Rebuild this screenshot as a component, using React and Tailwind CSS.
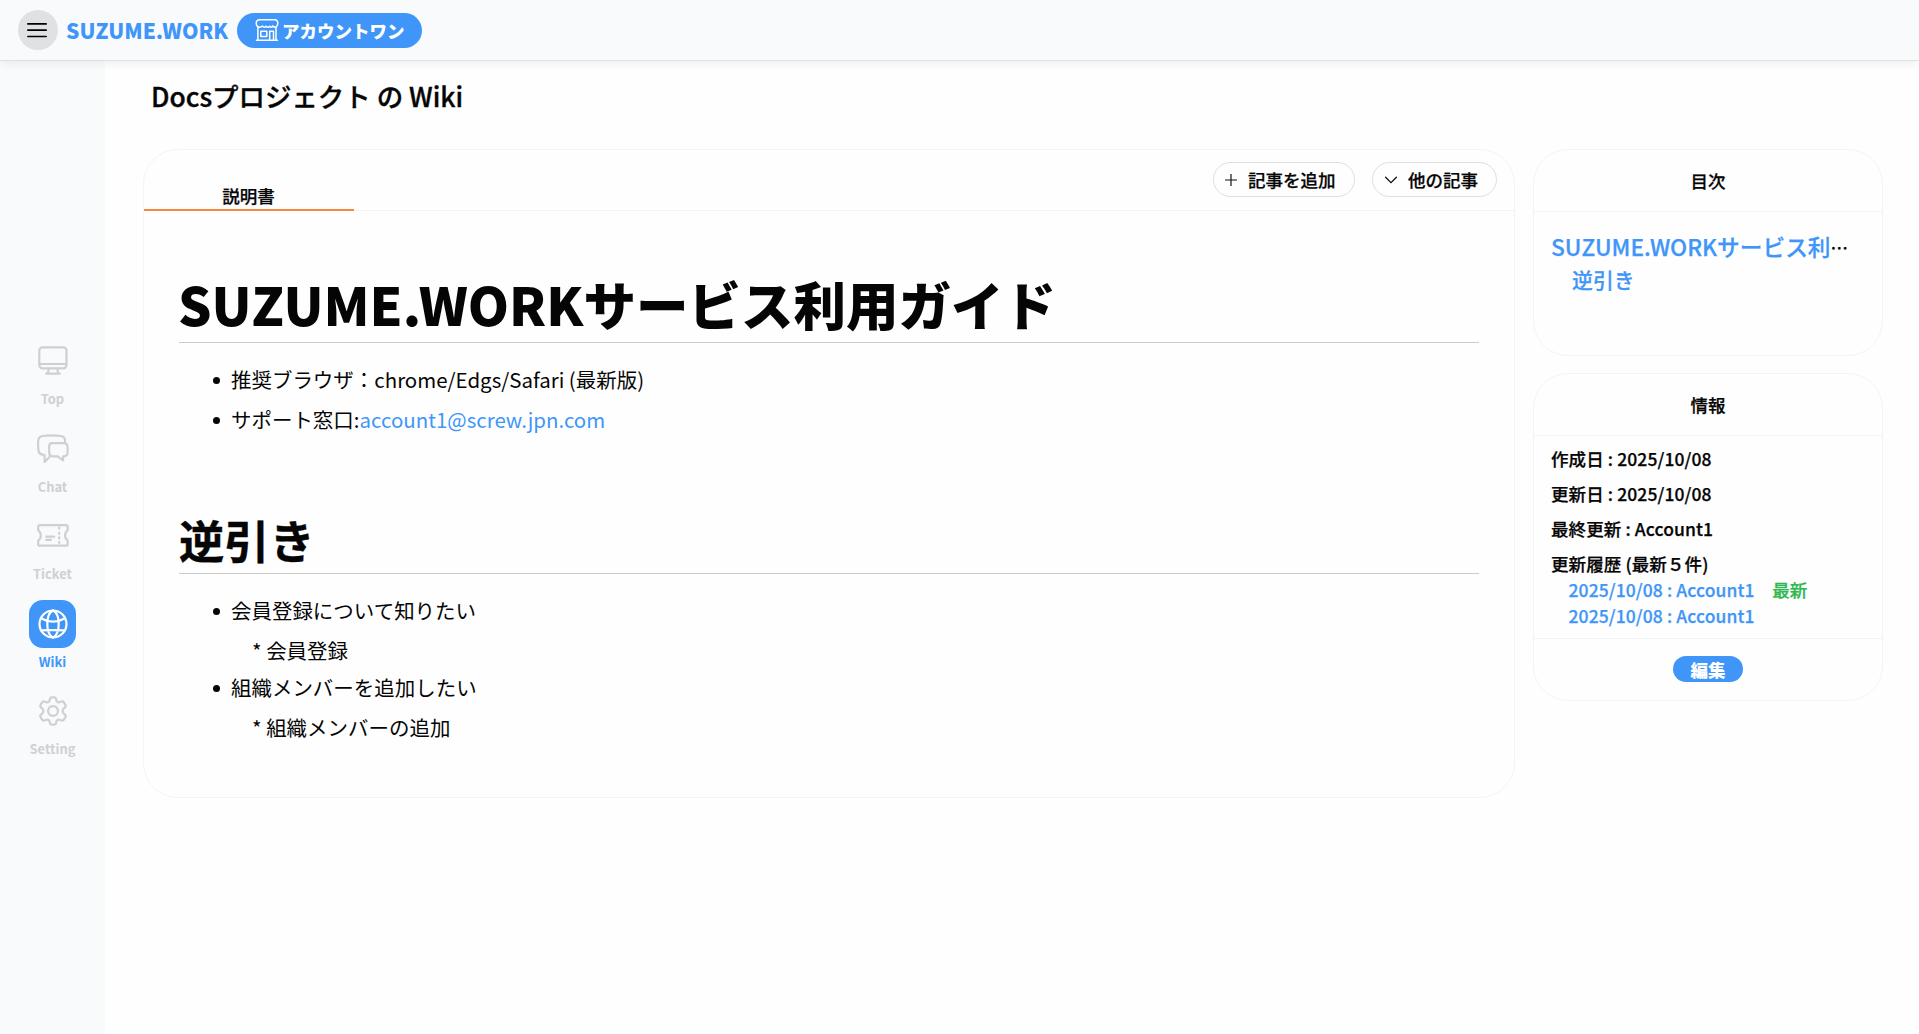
import React from "react";

const Svg = ({ className, children }) => (
  <svg viewBox="0 0 32 32" fill="none" stroke="currentColor" strokeWidth="2.2" strokeLinecap="round" strokeLinejoin="round" className={className}>
    {children}
  </svg>
);

const TopIcon = () => (
  <Svg className="size-8">
    <rect x="2.3" y="2.3" width="27.2" height="21" rx="3.2" />
    <path d="M2.5 19H29.3M11.7 23.6L11 28M20.3 23.6L21 28M9.2 28.7H22.8" />
  </Svg>
);
const ChatIcon = () => (
  <Svg className="size-8">
    <path d="M28 9.8V7.4C28 4.6 26.5 3.5 24 3C18 2.2 11 2.2 5.5 3C2.8 3.4 1.4 5 1.2 8C.9 11.5 1 14.5 1.5 17.5C1.9 20.6 3.6 21.8 7.6 22V29L12.7 23.7" />
    <path d="M15.2 10.2H26.6C29.6 10.2 30.5 11.3 30.6 14.2V19.8C30.5 22.3 29.3 23.3 26.6 23.3H26.1V27.5L20.9 23.3H15.6C13.2 23.3 12.2 22.2 12.2 19.8V13.5C12.2 11.3 13.1 10.2 15.2 10.2Z" />
  </Svg>
);
const TicketIcon = () => (
  <Svg className="size-8">
    <path d="M2.9 5.2H29C30.2 5.2 30.7 5.7 30.7 6.9V10.4C28.9 11.5 28.1 13.2 28.1 15.4C28.1 17.6 28.9 19.3 30.7 20.4V23.9C30.7 25.1 30.2 25.6 29 25.6H2.9C1.7 25.6 1.2 25.1 1.2 23.9V20.4C3 19.3 3.8 17.6 3.8 15.4C3.8 13.2 3 11.5 1.2 10.4V6.9C1.2 5.7 1.7 5.2 2.9 5.2Z" />
    <path d="M9.2 16.6H17.3M9.2 19.8H14M22.2 7.6V8.6M22.2 12.7V13.9M22.2 17.4V18.6M22.2 22V23" />
  </Svg>
);
const WikiIcon = () => (
  <Svg className="size-8">
    <circle cx="16" cy="16" r="13.5" />
    <path d="M16 2.5C11.8 4.5 10.3 10 10.3 16S11.8 27.5 16 29.5M16 2.5C20.2 4.5 21.7 10 21.7 16S20.2 27.5 16 29.5M4 10.2C11.5 14.6 20.5 14.6 28 10.2M4 22.3C11.5 22 20.5 22 28 22.3" />
  </Svg>
);
const SettingIcon = () => (
  <Svg className="size-8">
    <circle cx="16" cy="16" r="4.9" />
    <path d="M13 3.8C13.2 2.7 13.8 2.3 14.7 2.3H17.3C18.2 2.3 18.8 2.7 19 3.8L19.6 6.2C20.3 7.3 21.3 7.7 22.4 7.3L24.7 6.5C25.7 6.2 26.4 6.5 26.9 7.3L28.5 9.9C29 10.7 28.9 11.5 28.2 12.1L26.5 13.7C25.4 14.9 25.4 17.1 26.5 18.3L28.2 19.9C28.9 20.5 29 21.3 28.5 22.1L26.9 24.7C26.4 25.5 25.7 25.8 24.7 25.5L22.4 24.7C21.3 24.3 20.3 24.7 19.6 25.8L19 28.2C18.8 29.3 18.2 29.7 17.3 29.7H14.7C13.8 29.7 13.2 29.3 13 28.2L12.4 25.8C11.7 24.7 10.7 24.3 9.6 24.7L7.3 25.5C6.3 25.8 5.6 25.5 5.1 24.7L3.5 22.1C3 21.3 3.1 20.5 3.8 19.9L5.5 18.3C6.6 17.1 6.6 14.9 5.5 13.7L3.8 12.1C3.1 11.5 3 10.7 3.5 9.9L5.1 7.3C5.6 6.5 6.3 6.2 7.3 6.5L9.6 7.3C10.7 7.7 11.7 7.3 12.4 6.2Z" />
  </Svg>
);
const StoreIcon = () => (
  <svg viewBox="0 0 24 24" fill="none" stroke="currentColor" strokeWidth="1.5" strokeLinecap="round" strokeLinejoin="round" className="size-6">
    <path d="M4.5 1.7H19.5C21.5 1.7 22.8 3.3 22.8 5.2C22.8 7 22.5 8.3 21 8.9C19.8 9.3 18.5 9 17.9 8C17 9.5 15.5 9.5 14.8 8.2C13.8 9.5 12 9.5 11 8.2C10.2 9.5 8.5 9.5 7.3 8C6.4 9.1 4.5 9.4 3 8.7C1.5 8 1.2 6.6 1.2 5.2C1.2 3.2 2.5 1.7 4.5 1.7Z" />
    <path d="M2.9 9.4V22M21 9.4V22M1.5 22.2H22.5" />
    <rect x="5.8" y="13.2" width="6" height="5.2" />
    <path d="M14.7 22V13.3H18.5V22" />
  </svg>
);

const nav = [
  { label: "Top", Icon: TopIcon },
  { label: "Chat", Icon: ChatIcon },
  { label: "Ticket", Icon: TicketIcon },
  { label: "Wiki", Icon: WikiIcon, active: true },
  { label: "Setting", Icon: SettingIcon },
];

function Header() {
  return (
    <header className="relative z-10 flex h-[61px] items-center border-b border-[#dfe0e2] bg-[#f8fafc] pl-[18px] shadow-[0_2px_10px_rgba(0,0,0,0.07)]">
      <button className="flex size-10 items-center justify-center rounded-full bg-[#e0e1e3]">
        <svg viewBox="0 0 20 16" className="mr-0.5 h-4 w-5" stroke="#000" strokeWidth="1.7" strokeLinecap="round">
          <path d="M.8 1.8H19.2M.8 8.2H19.2M.8 14.5H19.2" />
        </svg>
      </button>
      <div className="ml-[8px] w-[171px] text-[21px] leading-8 font-black text-[#3f96f8]">SUZUME.WORK</div>
      <button className="flex h-[35px] w-[185px] items-center rounded-full bg-[#3f96f8] pl-[18px] text-[17.5px] leading-[26px] font-black text-white">
        <StoreIcon />
        <span className="ml-[3px] pt-px">アカウントワン</span>
      </button>
    </header>
  );
}

function Sidebar() {
  return (
    <nav className="flex w-[105px] shrink-0 flex-col items-center bg-[#f8fafc] pt-[276px]">
      {nav.map(({ label, Icon, active }) => (
        <div key={label} className={active ? "flex h-[87.6px] flex-col items-center text-[#3f96f8]" : "flex h-[87.6px] flex-col items-center text-[#cfd0d2]"}>
          <div className={active ? "flex h-12 w-[47px] items-center justify-center rounded-[14px] bg-[#3f96f8] text-white" : "flex h-12 w-[47px] items-center justify-center"}>
            <Icon />
          </div>
          <span className="mt-1 text-[12.9px] leading-5 font-bold">{label}</span>
        </div>
      ))}
    </nav>
  );
}

function Bullet({ children, note }) {
  return (
    <li>
      <div className="flex items-center pl-[34px]">
        <span className="mt-[3px] mr-[11px] size-[7px] rounded-full bg-[#050505]" />
        <span>{children}</span>
      </div>
      {note && <p className="mt-[3px] -mb-px pl-[73px] leading-[35px]">{note}</p>}
    </li>
  );
}

function Article() {
  return (
    <article className="h-[649px] w-[1372px] rounded-[35px] border border-[#f4f4f5]">
      <div className="flex h-[61px] items-end border-b border-[#f4f4f5]">
        <div className="-mb-px h-[35px] w-[210px] border-b-2 border-[#f5893a] pt-[7px] pr-px text-center text-[17.5px] leading-[26px] font-medium [-webkit-text-stroke:0.25px]">説明書</div>
        <div className="mr-[17px] mb-[13px] ml-auto flex gap-[17px]">
          <button className="flex h-[35px] w-[142px] items-center rounded-full border border-[#dedfe1] pl-[11px] text-[17.5px] font-medium [-webkit-text-stroke:0.25px]">
            <svg viewBox="0 0 12 12" className="mr-[11px] size-3" stroke="#111" strokeWidth="1.2"><path d="M6 0V12M0 6H12" /></svg>
            <span className="pt-px">記事を追加</span>
          </button>
          <button className="flex h-[35px] w-[125px] items-center rounded-full border border-[#dedfe1] pl-3 text-[17.5px] font-medium [-webkit-text-stroke:0.25px]">
            <svg viewBox="0 0 12 8" className="mr-[11px] h-2 w-3" fill="none" stroke="#111" strokeWidth="1.3" strokeLinecap="round"><path d="M.6 1.2L6 6.6L11.4 1.2" /></svg>
            <span className="pt-px">他の記事</span>
          </button>
        </div>
      </div>
      <div className="px-[35px] pt-[53px]">
        <h1 className="h-[79px] border-b border-[#cccccc] text-[52.5px] leading-[78px] font-black"><span className="-ml-px">SUZUME.WORKサービス利用ガイド</span></h1>
        <ul className="mt-4 text-[20.475px] leading-10">
          <Bullet>推奨ブラウザ：chrome/Edgs/Safari (最新版)</Bullet>
          <Bullet>サポート窓口:<a className="text-[#3f96f8]">account1@screw.jpn.com</a></Bullet>
        </ul>
        <h2 className="mt-[70px] h-[65px] border-b border-[#cccccc] text-[45.3px] leading-[61px] font-bold [-webkit-text-stroke:0.4px]">逆引き</h2>
        <ul className="mt-4 text-[20.475px] leading-10">
          <Bullet note="* 会員登録">会員登録について知りたい</Bullet>
          <Bullet note="* 組織メンバーの追加">組織メンバーを追加したい</Bullet>
        </ul>
      </div>
    </article>
  );
}

function Card({ title, className, children }) {
  return (
    <section className={className}>
      <h3 className="h-[62px] border-b border-[#f4f4f5] text-center text-[17.5px] leading-[61px] font-medium [-webkit-text-stroke:0.25px]">{title}</h3>
      {children}
    </section>
  );
}

export default function App() {
  return (
    <div lang="ja" className="flex h-[1034px] flex-col overflow-hidden bg-[#fefefe] font-['Noto_Sans_CJK_JP',sans-serif] text-[#050505]">
      <Header />
      <div className="flex flex-1">
        <Sidebar />
        <main className="pl-[38px]">
          <h2 className="h-[88px] pt-[15px] pl-2 text-[26.45px] leading-10 font-medium [-webkit-text-stroke:0.35px]">Docsプロジェクト の Wiki</h2>
          <div className="flex items-start gap-[18px]">
            <Article />
            <aside className="flex w-[350px] flex-col gap-[17px]">
              <Card title="目次" className="h-[207px] rounded-[35px] border border-[#f4f4f5]">
                <div className="px-[17px] pt-[19px] font-medium text-[#3f96f8] [-webkit-text-stroke:0.25px]">
                  <div className="flex h-8 text-[22.7px] leading-8"><a>SUZUME.WORKサービス利</a><span className="pt-px text-[17.5px] text-[#050505]">…</span></div>
                  <div className="pl-[21px] text-[20.9px] leading-8">逆引き</div>
                </div>
              </Card>
              <Card title="情報" className="h-[328px] rounded-[35px] border border-[#f4f4f5]">
                <div className="h-[203px] border-b border-[#f4f4f5] px-[17px] pt-[10px] text-[17.5px] leading-[26px] font-medium tracking-[0.1px] [-webkit-text-stroke:0.25px]">
                  <div className="flex flex-col gap-[9px]">
                    <p>作成日 : 2025/10/08</p>
                    <p>更新日 : 2025/10/08</p>
                    <p>最終更新 : Account1</p>
                    <p>更新履歴 (最新５件)</p>
                  </div>
                  <div className="pl-[17.5px] text-[#3f96f8]">
                    <p>2025/10/08 : Account1<span className="ml-[17.5px] text-[#2cb84e]">最新</span></p>
                    <p>2025/10/08 : Account1</p>
                  </div>
                </div>
                <button className="mx-auto mt-[17px] block h-[26px] w-[70px] rounded-full bg-[#3f96f8] text-[17.5px] leading-[28px] font-black text-white">編集</button>
              </Card>
            </aside>
          </div>
        </main>
      </div>
    </div>
  );
}
